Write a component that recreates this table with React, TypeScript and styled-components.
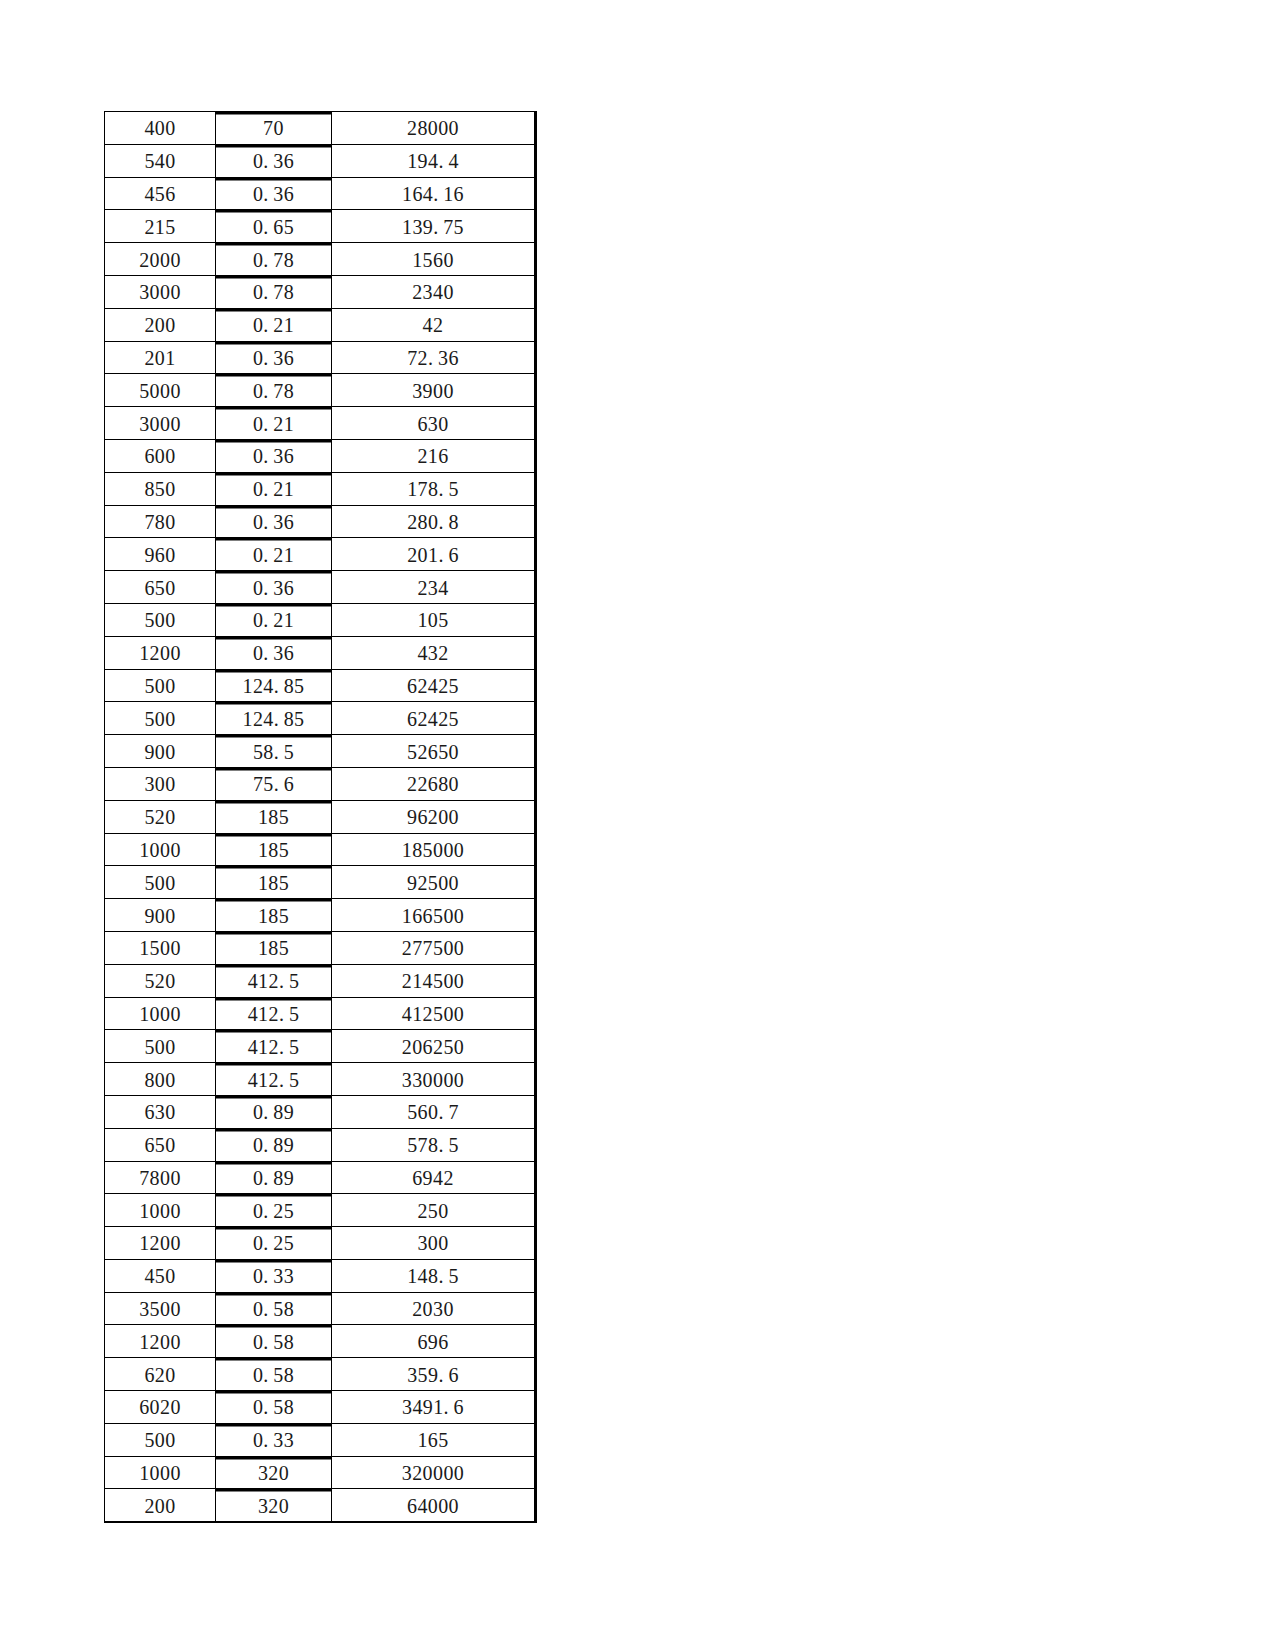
import React from "react";
import styled, { createGlobalStyle } from "styled-components";

const rows: [string, string, string][] = [
  ["400", "70", "28000"],
  ["540", "0.36", "194.4"],
  ["456", "0.36", "164.16"],
  ["215", "0.65", "139.75"],
  ["2000", "0.78", "1560"],
  ["3000", "0.78", "2340"],
  ["200", "0.21", "42"],
  ["201", "0.36", "72.36"],
  ["5000", "0.78", "3900"],
  ["3000", "0.21", "630"],
  ["600", "0.36", "216"],
  ["850", "0.21", "178.5"],
  ["780", "0.36", "280.8"],
  ["960", "0.21", "201.6"],
  ["650", "0.36", "234"],
  ["500", "0.21", "105"],
  ["1200", "0.36", "432"],
  ["500", "124.85", "62425"],
  ["500", "124.85", "62425"],
  ["900", "58.5", "52650"],
  ["300", "75.6", "22680"],
  ["520", "185", "96200"],
  ["1000", "185", "185000"],
  ["500", "185", "92500"],
  ["900", "185", "166500"],
  ["1500", "185", "277500"],
  ["520", "412.5", "214500"],
  ["1000", "412.5", "412500"],
  ["500", "412.5", "206250"],
  ["800", "412.5", "330000"],
  ["630", "0.89", "560.7"],
  ["650", "0.89", "578.5"],
  ["7800", "0.89", "6942"],
  ["1000", "0.25", "250"],
  ["1200", "0.25", "300"],
  ["450", "0.33", "148.5"],
  ["3500", "0.58", "2030"],
  ["1200", "0.58", "696"],
  ["620", "0.58", "359.6"],
  ["6020", "0.58", "3491.6"],
  ["500", "0.33", "165"],
  ["1000", "320", "320000"],
  ["200", "320", "64000"],
];

const GlobalStyle = createGlobalStyle`
  html, body {
    margin: 0;
    padding: 0;
    background: #fff;
  }
`;

const Page = styled.div`
  padding: 111px 0 0 104px;
  min-height: 1650px;
  box-sizing: border-box;
`;

const Sheet = styled.div`
  display: grid;
  grid-template-columns: 110px 117px 202px;
  grid-auto-rows: 32.8px;
  width: max-content;
  border-left: 1.5px solid #000;
  border-top: 1px solid #000;
  border-right: 3.5px solid #000;
  border-bottom: 1px solid #000;
  font-family: "Liberation Serif", "Noto Sans CJK SC", serif;
  font-size: 20px;
  letter-spacing: 0.4px;
  color: #1a1a1a;
`;

const Cell = styled.div<{ $mid?: boolean }>`
  display: flex;
  align-items: center;
  justify-content: center;
  box-sizing: border-box;
  padding-top: 2px;
  border-bottom: 1.2px solid #000;
  border-right: ${(p) => (p.$mid ? "1.5px" : "0")} solid #000;
  border-left: ${(p) => (p.$mid ? "1.8px" : "0")} solid #000;
  box-shadow: ${(p) => (p.$mid ? "inset 0 2.5px 0 #000" : "none")};
  white-space: pre;
`;

const Dot = styled.span`
  display: inline-block;
  width: 0.5em;
  text-align: left;
`;

const Num = ({ value }: { value: string }) => {
  const [whole, frac] = value.split(".");
  if (frac === undefined) return <>{whole}</>;
  return (
    <>
      {whole}
      <Dot>.</Dot>
      {frac}
    </>
  );
};

export default function App() {
  return (
    <>
      <GlobalStyle />
      <Page>
        <Sheet>
          {rows.map(([qty, price, total], i) => (
            <React.Fragment key={i}>
              <Cell>
                <Num value={qty} />
              </Cell>
              <Cell $mid>
                <Num value={price} />
              </Cell>
              <Cell>
                <Num value={total} />
              </Cell>
            </React.Fragment>
          ))}
        </Sheet>
      </Page>
    </>
  );
}
